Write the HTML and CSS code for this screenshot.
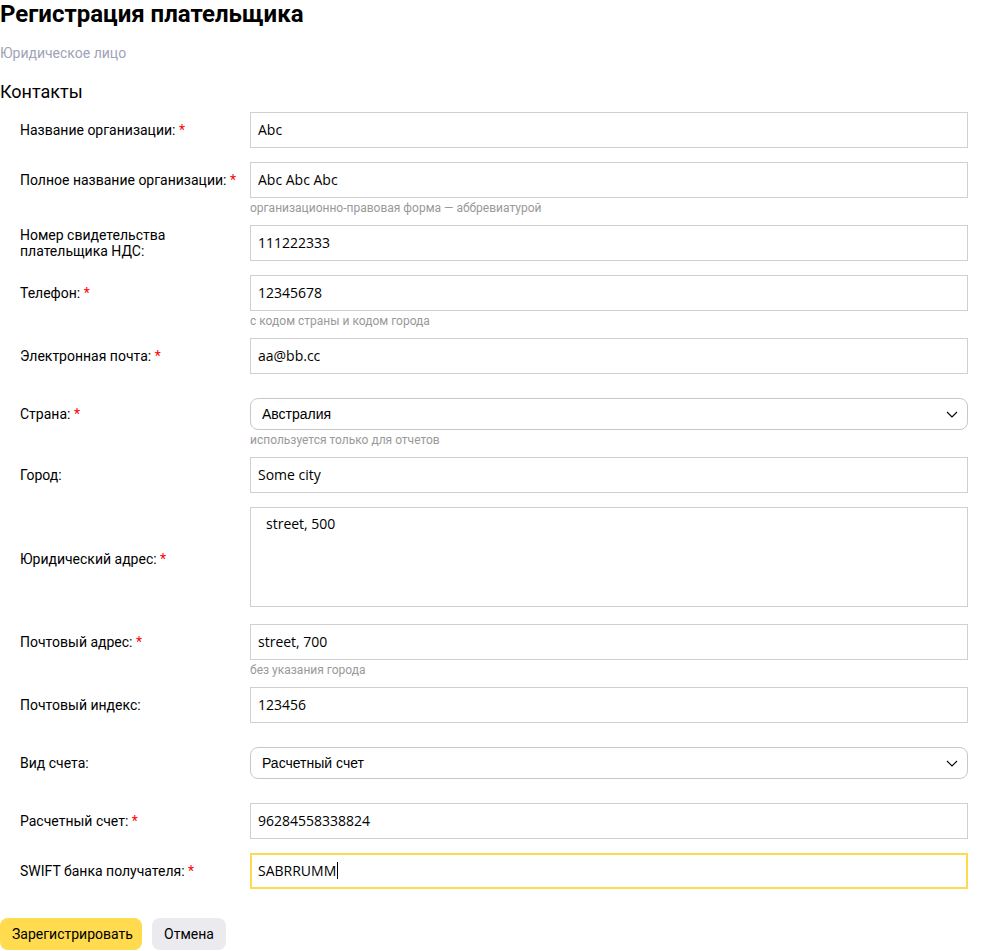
FILE: index.html
```html
<!DOCTYPE html>
<html lang="ru">
<head>
<meta charset="utf-8">
<title>Регистрация плательщика</title>
<link rel="stylesheet" href="styles.css">
</head>
<body>
<main class="page">
  <h1 class="title">Регистрация плательщика</h1>
  <div class="subtitle">Юридическое лицо</div>
  <h2 class="section">Контакты</h2>

  <form class="form">
    <div class="row">
      <label class="label">Название организации: <span class="req">*</span></label>
      <input class="input" type="text" value="Abc">
    </div>
    <div class="row">
      <label class="label">Полное название организации: <span class="req">*</span></label>
      <input class="input" type="text" value="Abc Abc Abc">
      <div class="hint">организационно-правовая форма — аббревиатурой</div>
    </div>
    <div class="row">
      <label class="label">Номер свидетельства<br>плательщика НДС:</label>
      <input class="input" type="text" value="111222333">
    </div>
    <div class="row">
      <label class="label">Телефон: <span class="req">*</span></label>
      <input class="input" type="text" value="12345678">
      <div class="hint">с кодом страны и кодом города</div>
    </div>
    <div class="row">
      <label class="label">Электронная почта: <span class="req">*</span></label>
      <input class="input" type="text" value="aa@bb.cc">
    </div>
    <div class="row row-select row-select-hint">
      <label class="label">Страна: <span class="req">*</span></label>
      <div class="select">
        <span class="select-text">Австралия</span>
        <svg class="chevron" width="12" height="7" viewBox="0 0 12 7"><path d="M1 1 L6 6 L11 1" fill="none" stroke="#000" stroke-width="1.1"/></svg>
      </div>
      <div class="hint">используется только для отчетов</div>
    </div>
    <div class="row">
      <label class="label">Город:</label>
      <input class="input" type="text" value="Some city">
    </div>
    <div class="row row-area">
      <label class="label">Юридический адрес: <span class="req">*</span></label>
      <textarea class="textarea">street, 500</textarea>
    </div>
    <div class="row">
      <label class="label">Почтовый адрес: <span class="req">*</span></label>
      <input class="input" type="text" value="street, 700">
      <div class="hint">без указания города</div>
    </div>
    <div class="row">
      <label class="label">Почтовый индекс:</label>
      <input class="input" type="text" value="123456">
    </div>
    <div class="row row-select">
      <label class="label">Вид счета:</label>
      <div class="select">
        <span class="select-text">Расчетный счет</span>
        <svg class="chevron" width="12" height="7" viewBox="0 0 12 7"><path d="M1 1 L6 6 L11 1" fill="none" stroke="#000" stroke-width="1.1"/></svg>
      </div>
    </div>
    <div class="row">
      <label class="label">Расчетный счет: <span class="req">*</span></label>
      <input class="input" type="text" value="96284558338824">
    </div>
    <div class="row">
      <label class="label">SWIFT банка получателя: <span class="req">*</span></label>
      <div class="input input-focus">SABRRUMM<span class="caret"></span></div>
    </div>

    <div class="actions">
      <button type="button" class="btn btn-primary">Зарегистрировать</button>
      <button type="button" class="btn btn-secondary">Отмена</button>
    </div>
  </form>
</main>
</body>
</html>
```

FILE: styles.css
```css
* { box-sizing: border-box; }

body {
  margin: 0;
  background: #fff;
  color: #000;
  font-family: "Roboto", "Liberation Sans", sans-serif;
  font-size: 14px;
}

.page {
  width: 1000px;
}

.title {
  margin: 0;
  padding-top: 0;
  font-size: 24px;
  font-weight: 700;
  line-height: 28px;
}

.subtitle {
  margin-top: 17px;
  font-size: 14px;
  line-height: 16px;
  color: #9ea3b8;
}

.section {
  margin: 20px 0 0;
  font-size: 18px;
  font-weight: 400;
  line-height: 22px;
}

.form {
  margin-top: 9px;
  display: flex;
  flex-direction: column;
  gap: 14px;
}

.row {
  display: grid;
  grid-template-columns: 250px 718px;
  align-items: center;
}

.label {
  grid-column: 1;
  grid-row: 1;
  padding-left: 20px;
  font-size: 14px;
  line-height: 16px;
  color: #000;
}

.req { color: #f00; }

.input {
  grid-column: 2;
  grid-row: 1;
  height: 36px;
  width: 718px;
  padding: 0 7px 1px;
  border: 1px solid #d0d0d0;
  border-radius: 0;
  font-family: "Open Sans", "Liberation Sans", sans-serif;
  font-size: 14px;
  color: #000;
  background: #fff;
  outline: none;
}

.input-focus {
  display: flex;
  align-items: center;
  border: 2px solid #fddb4f;
  padding: 0 6px 1px;
}

.caret {
  display: inline-block;
  width: 1px;
  height: 17px;
  background: #000;
  margin-left: 1px;
}

.hint {
  grid-column: 2;
  grid-row: 2;
  height: 13px;
  padding-top: 4px;
  font-size: 12px;
  line-height: 12px;
  color: #999;
  white-space: nowrap;
}

.row-select {
  margin: 10px 0;
}
.row-select-hint {
  margin-bottom: 0;
}
.row-select-hint .hint { padding-top: 4px; }

.select {
  grid-column: 2;
  grid-row: 1;
  height: 32px;
  border: 1px solid #c8c8c8;
  border-radius: 8px;
  display: flex;
  align-items: center;
  justify-content: space-between;
  padding: 0 9px 0 11px;
  font-family: "Liberation Sans", sans-serif;
  font-size: 14px;
}

.chevron { display: block; }

.textarea {
  grid-column: 2;
  grid-row: 1;
  display: block;
  width: 718px;
  height: 100px;
  margin-bottom: 3px;
  padding: 7px 15px;
  border: 1px solid #d0d0d0;
  border-radius: 0;
  resize: none;
  font-family: "Open Sans", "Liberation Sans", sans-serif;
  font-size: 14px;
  line-height: 18px;
  color: #000;
  outline: none;
}

.actions {
  margin-top: 15px;
  display: flex;
  gap: 10px;
}

.btn {
  height: 32px;
  border: none;
  border-radius: 8px;
  padding: 0 12px;
  font-family: "Roboto", "Liberation Sans", sans-serif;
  font-size: 14px;
  color: #000;
  cursor: pointer;
}

.btn-primary { background: #ffdb4d; width: 142px; }
.btn-secondary { background: #ebebef; width: 74px; }
```
